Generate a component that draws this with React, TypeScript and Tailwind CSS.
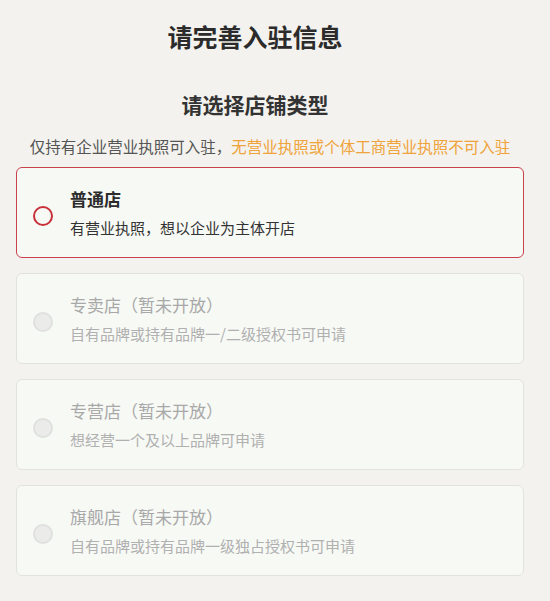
import React from 'react';

const shops = [
  { name: '普通店', desc: '有营业执照，想以企业为主体开店', active: true },
  { name: '专卖店（暂未开放）', desc: '自有品牌或持有品牌一/二级授权书可申请', active: false },
  { name: '专营店（暂未开放）', desc: '想经营一个及以上品牌可申请', active: false },
  { name: '旗舰店（暂未开放）', desc: '自有品牌或持有品牌一级独占授权书可申请', active: false },
];

export default function App() {
  return (
    <div
      className="min-h-[601px] w-[550px] bg-[#f3f2ee] pl-4 pr-[26px]"
      style={{ fontFamily: '"Noto Sans CJK SC", "Noto Sans", sans-serif' }}
    >
      {/* HEADER */}
      <h1 className="pr-[30px] pt-[19px] text-center text-[25px] font-bold leading-[34px] text-[#2b2b2b]">
        请完善入驻信息
      </h1>
      <h2 className="mt-[37px] pr-[30px] text-center text-[21px] font-bold leading-[28px] text-[#333333]">
        请选择店铺类型
      </h2>
      <p className="mt-[18px] whitespace-nowrap text-center text-[15.5px] leading-[20px] text-[#555555]">
        仅持有企业营业执照可入驻，<span className="text-[#f0a33a]">无营业执照或个体工商营业执照不可入驻</span>
      </p>

      {/* SHOP TYPES */}
      <div className="mt-[11px] flex flex-col gap-[15px]">
        {shops.map((shop) => (
          <div
            key={shop.name}
            className={`flex h-[91px] items-center rounded-[6px] border bg-[#f7f9f5] pl-[16px] ${
              shop.active ? 'border-[#c8414b]' : 'border-[#e2e3df]'
            }`}
          >
            <span
              className={`mt-[6px] h-[20px] w-[20px] shrink-0 rounded-full border-2 ${
                shop.active ? 'border-[#c8313a] bg-transparent' : 'border-[#e0e1de] bg-[#ebecea]'
              }`}
            />
            <div className="ml-[17px] flex flex-col gap-[8px]">
              <span
                className={`text-[17px] leading-[22px] ${
                  shop.active ? 'font-semibold text-[#2b2b2b]' : 'text-[#a8a8a8]'
                }`}
              >
                {shop.name}
              </span>
              <span className={`text-[15px] leading-[20px] ${shop.active ? 'text-[#333333]' : 'text-[#b0b0b0]'}`}>
                {shop.desc}
              </span>
            </div>
          </div>
        ))}
      </div>
    </div>
  );
}
